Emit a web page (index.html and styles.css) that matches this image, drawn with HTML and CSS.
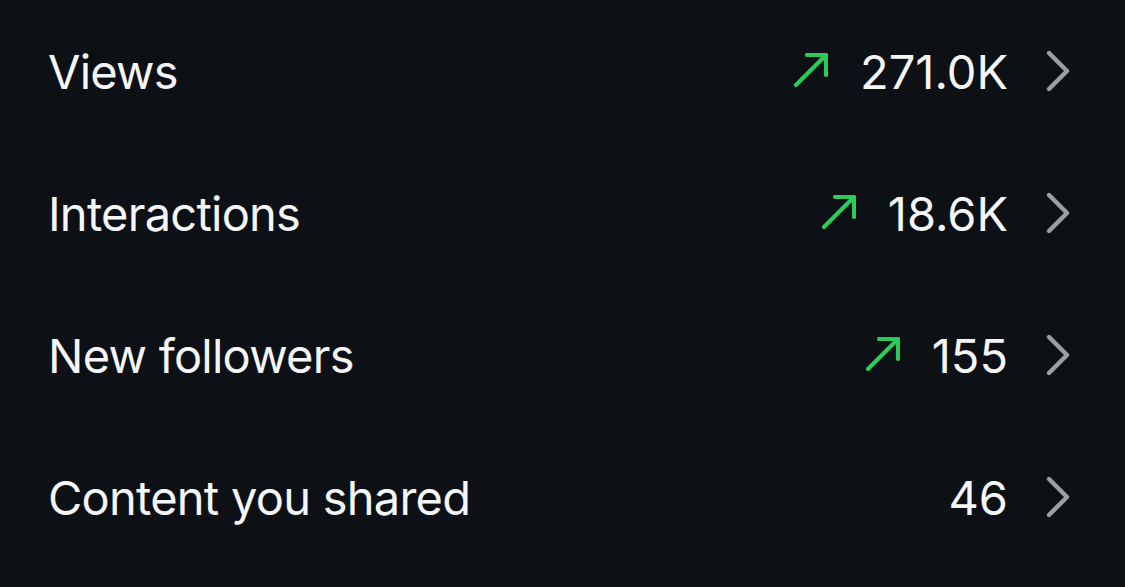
FILE: index.html
```html
<!DOCTYPE html>
<html lang="en">
<head>
<meta charset="utf-8">
<link rel="stylesheet" href="styles.css">
</head>
<body>
<ul class="stats">
  <li class="row">
    <span class="label">Views</span>
    <span class="value">
      <svg class="trend" viewBox="0 0 34 34" width="34" height="34"><path d="M2 32 L32 2 M13 2 H32 V22" fill="none" stroke="#2dca5a" stroke-width="4.2" stroke-linecap="round" stroke-linejoin="round"/></svg>
      <span class="num">271.0K</span>
    </span>
    <svg class="chev" viewBox="0 0 24 42" width="24" height="42"><path d="M3 3 L21 21 L3 39" fill="none" stroke="#9b9ea3" stroke-width="4.4" stroke-linecap="round" stroke-linejoin="round"/></svg>
  </li>
  <li class="row">
    <span class="label">Interactions</span>
    <span class="value">
      <svg class="trend" viewBox="0 0 34 34" width="34" height="34"><path d="M2 32 L32 2 M13 2 H32 V22" fill="none" stroke="#2dca5a" stroke-width="4.2" stroke-linecap="round" stroke-linejoin="round"/></svg>
      <span class="num">18.6K</span>
    </span>
    <svg class="chev" viewBox="0 0 24 42" width="24" height="42"><path d="M3 3 L21 21 L3 39" fill="none" stroke="#9b9ea3" stroke-width="4.4" stroke-linecap="round" stroke-linejoin="round"/></svg>
  </li>
  <li class="row">
    <span class="label">New followers</span>
    <span class="value">
      <svg class="trend" viewBox="0 0 34 34" width="34" height="34"><path d="M2 32 L32 2 M13 2 H32 V22" fill="none" stroke="#2dca5a" stroke-width="4.2" stroke-linecap="round" stroke-linejoin="round"/></svg>
      <span class="num">155</span>
    </span>
    <svg class="chev" viewBox="0 0 24 42" width="24" height="42"><path d="M3 3 L21 21 L3 39" fill="none" stroke="#9b9ea3" stroke-width="4.4" stroke-linecap="round" stroke-linejoin="round"/></svg>
  </li>
  <li class="row">
    <span class="label">Content you shared</span>
    <span class="value">
      <span class="num">46</span>
    </span>
    <svg class="chev" viewBox="0 0 24 42" width="24" height="42"><path d="M3 3 L21 21 L3 39" fill="none" stroke="#9b9ea3" stroke-width="4.4" stroke-linecap="round" stroke-linejoin="round"/></svg>
  </li>
</ul>
</body>
</html>
```
FILE: styles.css
```css
html, body {
  margin: 0;
  padding: 0;
  background: #0d1015;
  height: 100%;
}
body {
  font-family: Inter, "Liberation Sans", sans-serif;
  color: #f4f5f7;
  overflow: hidden;
}
.stats {
  list-style: none;
  margin: 0;
  padding: 0;
}
.row {
  display: flex;
  align-items: center;
  height: 142px;
  padding: 0 55px 0 48px;
}
.label {
  flex: 1;
  font-size: 47px;
  letter-spacing: -0.75px;
}
.value {
  display: flex;
  align-items: center;
  gap: 32px;
}
.trend {
  display: block;
  margin-top: -2px;
}
.num {
  font-size: 47px;
  letter-spacing: 0;
}
.chev {
  display: block;
  margin-left: 38px;
}
```
